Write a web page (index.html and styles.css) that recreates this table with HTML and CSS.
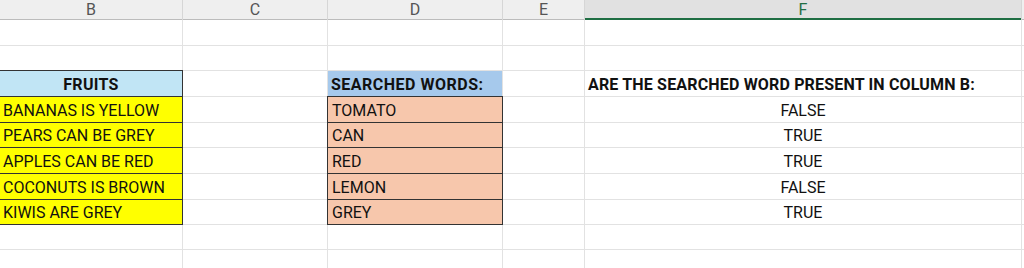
FILE: index.html
```html
<!DOCTYPE html>
<html>
<head>
<meta charset="utf-8">
<link rel="stylesheet" href="styles.css">
</head>
<body>
<div class="sheet">
  <div class="colhead">
    <div class="ch">B</div>
    <div class="ch">C</div>
    <div class="ch">D</div>
    <div class="ch">E</div>
    <div class="ch ch-sel">F</div>
    <div class="ch"></div>
  </div>
  <div class="grid">
    <!-- row 1 -->
    <div class="c"></div><div class="c"></div><div class="c"></div><div class="c"></div><div class="c"></div><div class="c"></div>
    <!-- row 2 -->
    <div class="c"></div><div class="c"></div><div class="c"></div><div class="c"></div><div class="c"></div><div class="c"></div>
    <!-- row 3 headers -->
    <div class="c fruits-head">FRUITS</div>
    <div class="c"></div>
    <div class="c search-head">SEARCHED WORDS:</div>
    <div class="c"></div>
    <div class="c result-head">ARE THE SEARCHED WORD PRESENT IN COLUMN B:</div>
    <div class="c"></div>
    <!-- row 4 -->
    <div class="c fruit">BANANAS IS YELLOW</div>
    <div class="c"></div>
    <div class="c word">TOMATO</div>
    <div class="c"></div>
    <div class="c result">FALSE</div>
    <div class="c"></div>
    <!-- row 5 -->
    <div class="c fruit">PEARS CAN BE GREY</div>
    <div class="c"></div>
    <div class="c word">CAN</div>
    <div class="c"></div>
    <div class="c result">TRUE</div>
    <div class="c"></div>
    <!-- row 6 -->
    <div class="c fruit">APPLES CAN BE RED</div>
    <div class="c"></div>
    <div class="c word">RED</div>
    <div class="c"></div>
    <div class="c result">TRUE</div>
    <div class="c"></div>
    <!-- row 7 -->
    <div class="c fruit">COCONUTS IS BROWN</div>
    <div class="c"></div>
    <div class="c word">LEMON</div>
    <div class="c"></div>
    <div class="c result">FALSE</div>
    <div class="c"></div>
    <!-- row 8 -->
    <div class="c fruit">KIWIS ARE GREY</div>
    <div class="c"></div>
    <div class="c word">GREY</div>
    <div class="c"></div>
    <div class="c result">TRUE</div>
    <div class="c"></div>
    <!-- row 9 -->
    <div class="c"></div><div class="c"></div><div class="c"></div><div class="c"></div><div class="c"></div><div class="c"></div>
    <!-- row 10 -->
    <div class="c"></div><div class="c"></div><div class="c"></div><div class="c"></div><div class="c"></div><div class="c"></div>
  </div>
</div>
</body>
</html>
```
FILE: styles.css
```css
html, body {
  margin: 0;
  padding: 0;
  background: #ffffff;
  overflow: hidden;
}

.sheet {
  width: 1024px;
  height: 268px;
  font-family: Roboto, "Liberation Sans", Arial, sans-serif;
  font-size: 16px;
  color: #111;
}

.colhead {
  display: grid;
  grid-template-columns: 182px 144px 174px 81px 436px 2px;
  grid-template-rows: 20px;
  column-gap: 1px;
  background: #d6d6d6;
}

.ch {
  box-sizing: border-box;
  background: #efefef;
  border-bottom: 1px solid #bcbcbc;
  text-align: center;
  line-height: 19px;
  color: #555;
  font-size: 16px;
}

.ch-sel {
  background: #e1e1e1;
  border-bottom: 2px solid #1f6e43;
  color: #1f6e43;
}

.grid {
  display: grid;
  grid-template-columns: 182px 144px 174px 81px 436px 2px;
  grid-template-rows: 25px 24px 25px 25px 24px 25px 25px 24px 24px 30px;
  gap: 1px;
  background: #e2e2e2;
}

.c {
  background: #ffffff;
  display: flex;
  align-items: flex-end;
  box-sizing: border-box;
  padding: 0 3px 3px 3px;
  line-height: 17px;
  white-space: nowrap;
  min-width: 0;
}

.fruits-head {
  background: #c1e5f5;
  font-weight: bold;
  letter-spacing: 0.3px;
  justify-content: center;
  outline: 1px solid #333;
}

.fruit {
  background: #ffff00;
  outline: 1px solid #333;
}

.search-head {
  background: #a6c9ec;
  font-weight: bold;
  letter-spacing: 0.5px;
}

.word {
  background: #f7c7ac;
  outline: 1px solid #333;
  padding-left: 4px;
}

.result-head {
  font-weight: bold;
  letter-spacing: 0.17px;
  overflow: visible;
}

.result {
  justify-content: center;
}
```
